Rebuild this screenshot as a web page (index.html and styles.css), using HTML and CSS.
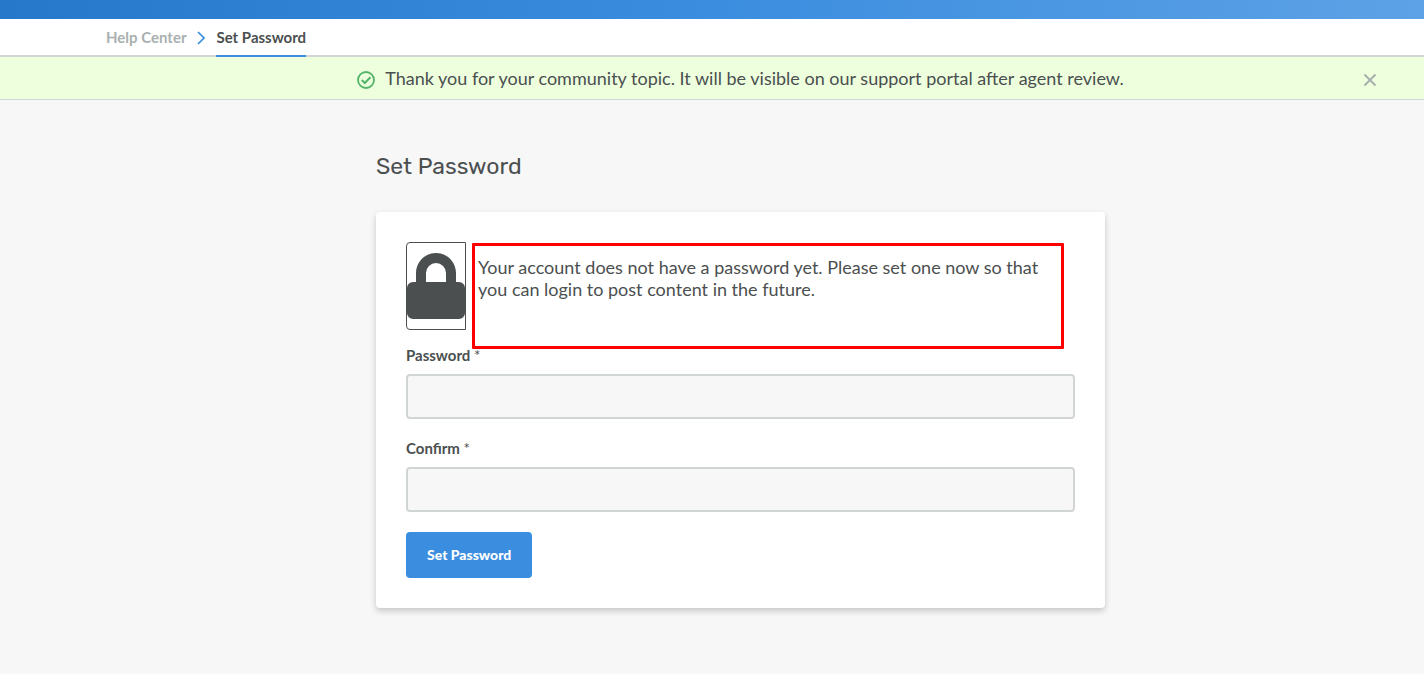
FILE: index.html
```html
<!DOCTYPE html>
<html lang="en">
<head>
<meta charset="utf-8">
<title>Set Password</title>
<link rel="stylesheet" href="styles.css">
</head>
<body>
<div class="topbar"></div>
<nav class="breadcrumbs" aria-label="Breadcrumb">
  <a class="crumb" href="#">Help Center</a>
  <svg class="chevron" width="8" height="14" viewBox="0 0 8 14" aria-hidden="true"><path d="M1 1l6 6-6 6" fill="none" stroke="#3b8ddf" stroke-width="1.7"/></svg>
  <a class="crumb crumb-current" href="#" aria-current="page">Set Password</a>
</nav>
<div class="alert" role="status">
  <svg class="alert-icon" width="18" height="18" viewBox="0 0 18 18" aria-hidden="true"><circle cx="9" cy="9" r="8" fill="none" stroke="#53b567" stroke-width="1.8"/><path d="M4.8 9l3 3 5.6-5.8" fill="none" stroke="#53b567" stroke-width="2"/></svg>
  <p class="alert-text">Thank you for your community topic. It will be visible on our support portal after agent review.</p>
  <button class="alert-close" type="button" aria-label="Close"><svg width="14" height="14" viewBox="0 0 14 14" aria-hidden="true"><path d="M1.5 1.5l11 11M12.5 1.5l-11 11" fill="none" stroke="#a5adac" stroke-width="1.8"/></svg></button>
</div>
<main class="content">
  <h1 class="title">Set Password</h1>
  <form class="card">
    <div class="intro">
      <div class="lock">
        <svg width="58" height="66" viewBox="0 0 58 66" aria-hidden="true"><path fill="#4b4f50" fill-rule="evenodd" d="M9 29V20C9 9 18 0 29 0s20 9 20 20v9h3a6 6 0 0 1 6 6v25a6 6 0 0 1-6 6H6a6 6 0 0 1-6-6V35a6 6 0 0 1 6-6zM19 29h20v-9a10 10 0 0 0-20 0z"/></svg>
      </div>
      <p class="intro-text">Your account does not have a password yet. Please set one now so that you can login to post content in the future.</p>
      <div class="highlight"></div>
    </div>
    <div class="field">
      <label class="label" for="password">Password <span class="required">*</span></label>
      <input class="input" id="password" type="password">
    </div>
    <div class="field">
      <label class="label" for="confirm">Confirm <span class="required">*</span></label>
      <input class="input" id="confirm" type="password">
    </div>
    <button class="submit" type="submit">Set Password</button>
  </form>
</main>
</body>
</html>
```
FILE: styles.css
```css
* { box-sizing: border-box; }
body {
  margin: 0;
  background: #f7f7f7;
  color: #4b4f50;
  font-family: Lato, "Liberation Sans", sans-serif;
  font-size: 18px;
  font-weight: 400;
  line-height: 22px;
}
p, h1 { margin: 0; }
.topbar {
  height: 19px;
  background: linear-gradient(90deg, #2679ca, #3b8ddf 50%, #5da2e6);
}
.breadcrumbs {
  display: flex;
  align-items: center;
  gap: 11px;
  height: 38px;
  padding-left: 106px;
  background: #fff;
  box-shadow: inset 0 -2px #d1d5d4;
}
.crumb {
  display: flex;
  align-items: center;
  height: 38px;
  border-bottom: 2px solid transparent;
  color: #a9b0b0;
  font-size: 15px;
  font-weight: bold;
  text-decoration: none;
}
.crumb-current { color: #4b4f50; border-bottom-color: #3b8ddf; }
.alert {
  position: relative;
  display: flex;
  align-items: center;
  justify-content: center;
  gap: 10px;
  height: 43px;
  padding: 0 49px 0 106px;
  background: #edffdd;
  border-bottom: 1px solid #d1d5d4;
}
.alert-icon { margin-top: 3px; }
.alert-close {
  position: absolute;
  right: 47px;
  top: 16px;
  display: flex;
  padding: 0;
  border: 0;
  background: none;
}
.content {
  width: 100%;
  max-width: 884px;
  margin: 0 auto;
  padding: 50px 49px 60px 106px;
}
.title {
  margin-bottom: 30px;
  font-family: Rubik, Roboto, sans-serif;
  font-size: 23px;
  font-weight: 400;
  line-height: 32px;
}
.card {
  padding: 30px;
  background: #fff;
  border-radius: 4px;
  box-shadow: 0 3px 6px rgba(0, 0, 0, 0.2);
}
.intro {
  position: relative;
  display: flex;
  gap: 12px;
  margin-bottom: 16px;
}
.lock {
  flex: none;
  width: 60px;
  height: 88px;
  padding-top: 10px;
  border: 1px solid #4b4f50;
  border-radius: 4px 0 0 4px;
}
.lock svg { display: block; }
.intro-text { padding: 14px 30px 0 0; }
.highlight {
  position: absolute;
  top: 1px;
  left: 66px;
  right: 11px;
  height: 106px;
  border: 3px solid #f00;
  border-radius: 1px;
}
.field { margin-bottom: 20px; }
.label {
  display: block;
  margin-bottom: 10px;
  font-size: 15px;
  font-weight: 700;
  line-height: 18px;
}
.required { font-weight: 400; }
.input {
  display: block;
  width: 100%;
  height: 45px;
  padding: 0 12px;
  border: 2px solid #d1d5d4;
  border-radius: 4px;
  background: #f7f7f7;
  font: inherit;
}
.submit {
  display: block;
  height: 46px;
  padding: 0 21px 2px;
  border: 0;
  border-radius: 4px;
  background: #3b8ddf;
  color: #fff;
  font-family: inherit;
  font-size: 14px;
  font-weight: 900;
}
```
